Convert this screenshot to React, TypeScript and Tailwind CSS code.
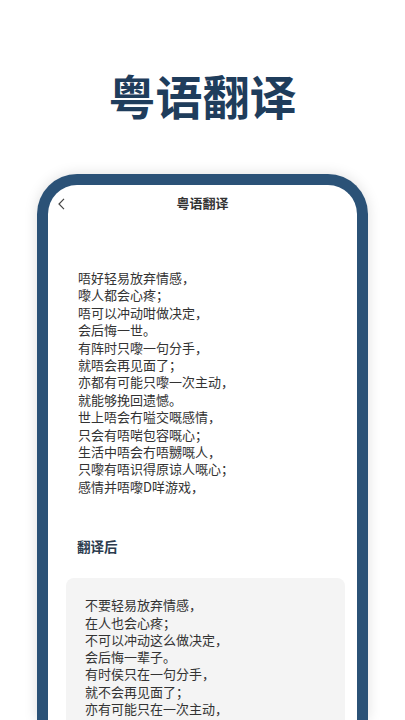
import React from "react";

const original = [
  "唔好轻易放弃情感，",
  "嚟人都会心疼；",
  "唔可以冲动咁做决定，",
  "会后悔一世。",
  "有阵时只嚟一句分手，",
  "就唔会再见面了；",
  "亦都有可能只嚟一次主动，",
  "就能够挽回遗憾。",
  "世上唔会冇嗌交嘅感情，",
  "只会有唔啱包容嘅心；",
  "生活中唔会冇唔嬲嘅人，",
  "只嚟有唔识得原谅人嘅心；",
  "感情并唔嚟D咩游戏，",
];

const translated = [
  "不要轻易放弃情感，",
  "在人也会心疼；",
  "不可以冲动这么做决定，",
  "会后悔一辈子。",
  "有时侯只在一句分手，",
  "就不会再见面了；",
  "亦有可能只在一次主动，",
];

export default function App() {
  return (
    <div
      className="w-full h-[720px] overflow-hidden bg-white flex flex-col items-center"
      style={{ fontFamily: '"Noto Sans CJK SC", "Noto Sans", sans-serif' }}
    >
      <div className="pt-[67px] h-[123px] text-[47px] leading-[56px] font-bold text-[#1f3d5c]">
        粤语翻译
      </div>
      <div className="mt-[51px] w-[331px] flex-1 border-[11px] border-b-0 border-[#2b5277] rounded-t-[40px] bg-white shadow-[0_0_14px_rgba(0,0,0,0.13)] flex flex-col">
        <div className="relative h-[36px] flex items-center justify-center">
          <svg
            className="absolute left-[10px] top-[13px]"
            width="7"
            height="12"
            viewBox="0 0 7 12"
            fill="none"
          >
            <polyline points="6,0.8 1,6 6,11.2" stroke="#444" strokeWidth="1.2" />
          </svg>
          <span className="text-[13px] font-bold text-[#333]">粤语翻译</span>
        </div>
        <div className="mt-[48px] pl-[30px] text-[13px] leading-[17.4px] text-[#333]">
          {original.map((l, i) => (
            <div key={i}>{l}</div>
          ))}
        </div>
        <div className="mt-[41px] pl-[29px] text-[13.5px] leading-[20px] font-bold text-[#2a3a4d]">
          翻译后
        </div>
        <div className="mt-[22px] ml-[18px] w-[279px] flex-1 rounded-t-[8px] bg-[#f4f4f4] pt-[18px] pl-[19px] text-[13px] leading-[17.3px] text-[#333]">
          {translated.map((l, i) => (
            <div key={i}>{l}</div>
          ))}
        </div>
      </div>
    </div>
  );
}
